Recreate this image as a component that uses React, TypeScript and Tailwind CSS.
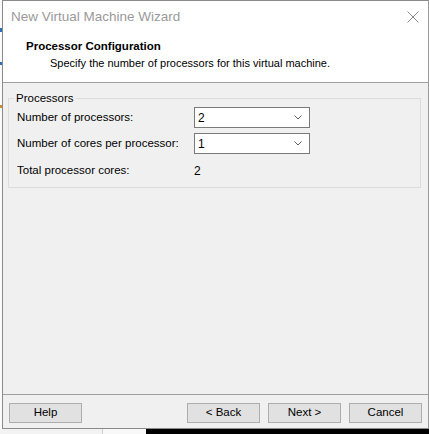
import React from 'react'

const font = { fontFamily: '"Segoe UI", "Liberation Sans", Arial, sans-serif' }

function Select({ value }: { value: string }) {
  return (
    <div className="w-[116px] h-[21px] bg-white border border-[#7a7a7a] flex items-center justify-between pl-[3px] pr-[7px]">
      <span className="text-[12px] text-black leading-none">{value}</span>
      <svg width="8" height="5" viewBox="0 0 8 5" className="text-[#606060]">
        <path d="M0.5 0.5 L4 4 L7.5 0.5" fill="none" stroke="currentColor" strokeWidth="1" />
      </svg>
    </div>
  )
}

function Button({ label, className = '' }: { label: string; className?: string }) {
  return (
    <div className={`w-[73px] h-[20px] bg-[#e1e1e1] border border-[#adadad] flex items-center justify-center text-[11.5px] text-black ${className}`}>
      {label}
    </div>
  )
}

export default function App() {
  return (
    <div style={font} className="w-[429px] h-[434px] bg-[#f6f6f6] overflow-hidden flex flex-col">
      <div className="flex h-[429px]">
        {/* desktop strip behind the window */}
        <div className="w-[2px] flex flex-col bg-[#fafafa]">
          <div className="h-[28px]" />
          <div className="h-[4px] bg-[#2a6fb8]" />
          <div className="h-[30px]" />
          <div className="h-[3px] bg-[#2a6fb8]" />
          <div className="h-[40px]" />
          <div className="h-[3px] bg-[#d08a30]" />
        </div>

        {/* window */}
        <div className="w-[427px] border border-[#8a8a8a] border-r-[#9a9a9a] flex flex-col bg-[#f0f0f0]">
          <div className="bg-white h-[81px] flex flex-col">
            <div className="h-[31px] flex items-center justify-between pl-[8px] pr-[8px]">
              <span className="text-[13.5px] text-[#9a9a9a] leading-none">New Virtual Machine Wizard</span>
              <svg width="12" height="12" viewBox="0 0 12 12" className="text-[#8a8a8a] mr-[1px]">
                <path d="M0.5 0.5 L11.5 11.5 M11.5 0.5 L0.5 11.5" stroke="currentColor" strokeWidth="1" />
              </svg>
            </div>
            <div className="pl-[23px] pt-[7px] text-[11.5px] text-black font-bold leading-[15px]">Processor Configuration</div>
            <div className="pl-[47px] pt-[2px] text-[11px] text-black leading-[15px]">
              Specify the number of processors for this virtual machine.
            </div>
          </div>
          <div className="h-px bg-[#a0a0a0]" />

          <div className="flex-1 flex flex-col">
            <div className="px-[5px] pt-[15px] flex-1">
              <div className="relative border border-[#dcdcdc] h-[90px] w-[413px] pt-[8px] pl-[8px]">
                <span className="absolute -top-[9px] left-[5px] bg-[#f0f0f0] px-[2px] text-[11.5px] text-black leading-[16px]">
                  Processors
                </span>
                <div className="flex flex-col gap-[5px]">
                  <div className="flex items-center h-[21px]">
                    <span className="w-[177px] whitespace-nowrap text-[11.5px] text-black">Number of processors:</span>
                    <Select value="2" />
                  </div>
                  <div className="flex items-center h-[21px]">
                    <span className="w-[177px] whitespace-nowrap text-[11.5px] text-black">Number of cores per processor:</span>
                    <Select value="1" />
                  </div>
                  <div className="flex items-center h-[21px] mt-[1px]">
                    <span className="w-[177px] whitespace-nowrap text-[11.5px] text-black">Total processor cores:</span>
                    <span className="text-[12px] text-black">2</span>
                  </div>
                </div>
              </div>
            </div>

            <div className="h-px bg-[#a0a0a0]" />
            <div className="h-[33px] flex items-start pt-[8px] pl-[6px] pr-[6px]">
              <Button label="Help" />
              <div className="flex-1" />
              <Button label="< Back" />
              <Button label="Next >" className="ml-[8px]" />
              <Button label="Cancel" className="ml-[8px]" />
            </div>
          </div>
        </div>
      </div>

      {/* desktop below the window */}
      <div className="flex-1 flex">
        <div className="w-[103px] bg-[#f3f3f3] border-r border-[#d0d0d0]" />
        <div className="w-[43px] bg-[#f8f8f8]" />
        <div className="flex-1 bg-black" />
      </div>
    </div>
  )
}
